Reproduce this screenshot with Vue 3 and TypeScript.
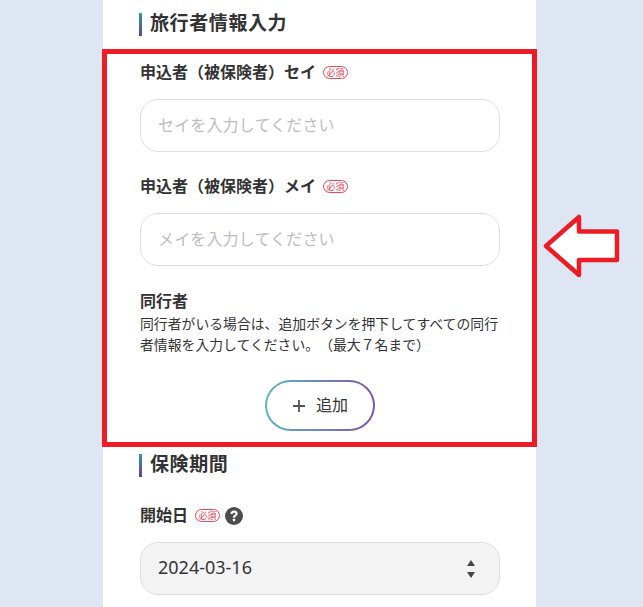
<script setup lang="ts">
const required = '必須'
</script>

<template>
  <div class="page">
    <main class="card">
      <h2 class="heading first">旅行者情報入力</h2>

      <div class="field sei">
        <div class="label"><span>申込者（被保険者）セイ</span><span class="req">{{ required }}</span></div>
        <input class="text" type="text" placeholder="セイを入力してください" />
      </div>

      <div class="field mei">
        <div class="label"><span>申込者（被保険者）メイ</span><span class="req">{{ required }}</span></div>
        <input class="text" type="text" placeholder="メイを入力してください" />
      </div>

      <div class="companion">
        <div class="label plain">同行者</div>
        <p class="desc">同行者がいる場合は、追加ボタンを押下してすべての同行者情報を入力してください。（最大７名まで）</p>
      </div>

      <div class="add-row">
        <button class="add" type="button">
          <svg width="14" height="14" viewBox="0 0 14 14" aria-hidden="true"><path d="M7 1v12M1 7h12" stroke="#555" stroke-width="1.8" fill="none" /></svg>
          <span>追加</span>
        </button>
      </div>

      <h2 class="heading second">保険期間</h2>

      <div class="field start">
        <div class="label">
          <span>開始日</span><span class="req">{{ required }}</span>
          <svg class="help" width="18" height="18" viewBox="0 0 18 18" aria-hidden="true">
            <circle cx="9" cy="9" r="9" fill="#4d4d4d" />
            <path d="M5.400 7c0-2.100 1.500-3.400 3.700-3.400 2.100 0 3.600 1.200 3.600 3 0 1.300-.7 2-1.600 2.600-.8.500-1 .8-1 1.600H7.900c0-1.500.5-2.200 1.400-2.800.8-.5 1.100-.8 1.100-1.300 0-.6-.5-1-1.300-1-.9 0-1.400.6-1.500 1.400z" fill="#fff" />
            <rect x="7.900" y="11.800" width="2.200" height="2.400" rx=".4" fill="#fff" />
          </svg>
        </div>
        <div class="date">
          <span>2024-03-16</span>
          <svg width="8" height="18" viewBox="0 0 8 18" aria-hidden="true"><path d="M4 0l4 6H0zM0 12h8l-4 6z" fill="#444" /></svg>
        </div>
      </div>
    </main>

    <div class="mark"></div>
    <svg class="arrow" width="84" height="72" viewBox="0 0 84 72" aria-hidden="true">
      <path d="M6 36L39 7V21.500H77V50H39V65Z" fill="#fff" stroke="#ed1c24" stroke-width="4.500" stroke-linejoin="round" />
    </svg>
  </div>
</template>

<style scoped>
.page {
  position: relative;
  width: 643px;
  height: 607px;
  overflow: hidden;
  background: #dfe6f3;
  font-family: "Noto Sans CJK JP", "Noto Sans", sans-serif;
  text-spacing-trim: space-all;
  color: #333;
}
.card {
  width: 433px;
  height: 607px;
  margin-left: 103px;
  padding: 0 36px 0 37px;
  box-sizing: border-box;
  background: #fff;
  overflow: hidden;
}
.heading {
  margin: 0;
  padding-left: 8px;
  margin-left: -1px;
  height: 23px;
  line-height: 18px;
  font-size: 19px;
  font-weight: 700;
  letter-spacing: 0.6px;
  border-left: 3px solid;
  border-image: linear-gradient(180deg, #2a9db5, #6b3a96) 1;
  box-sizing: content-box;
}
.heading.first { margin-top: 13px; }
.heading.second { margin-top: 23px; }
.field.sei { margin-top: 24px; }
.field.mei { margin-top: 22px; }
.field.start { margin-top: 26px; }
.label {
  display: flex;
  align-items: center;
  height: 22px;
  font-size: 16px;
  font-weight: 700;
  line-height: 22px;
}
.req {
  display: inline-flex;
  align-items: center;
  justify-content: center;
  width: 25px;
  height: 13px;
  margin: 2px 0 0 7px;
  border: 1px solid #ee4455;
  border-radius: 7px;
  box-sizing: border-box;
  color: #ee4455;
  font-size: 9px;
  font-weight: 400;
  line-height: 1;
}
.help { margin: 3px 0 0 5px; }
.text,
.date {
  display: flex;
  align-items: center;
  width: 360px;
  height: 53px;
  margin-top: 17px;
  padding: 0 18px 4px 17px;
  box-sizing: border-box;
  border: 1px solid #dedede;
  border-radius: 18px;
  font-family: inherit;
  font-size: 16px;
  letter-spacing: 0.15px;
  outline: none;
  background: #fff;
  color: #333;
}
.text::placeholder { color: #bdbdbd; opacity: 1; }
.date {
  justify-content: space-between;
  background: #f3f3f3;
  padding: 0 24px 3px 17px;
  font-family: "Noto Sans", sans-serif;
  font-size: 18px;
  letter-spacing: 0;
}
.date svg { margin-top: 3px; }
.companion { margin-top: 23px; }
.label.plain { height: 22px; }
.desc {
  margin: 2px 0 0;
  font-size: 13.850px;
  line-height: 21px;
  color: #333;
}
.add-row {
  display: flex;
  justify-content: center;
  margin-top: 25px;
}
.add {
  display: flex;
  align-items: center;
  justify-content: center;
  gap: 10px;
  width: 110px;
  height: 51px;
  border: 2px solid transparent;
  border-radius: 26px;
  background:
    linear-gradient(#fff, #fff) padding-box,
    linear-gradient(90deg, #5cb5c8, #7d56a8) border-box;
  font-family: inherit;
  font-size: 16px;
  color: #333;
  padding: 0 0 3px;
}
.add svg { margin-top: 3px; }
.mark {
  position: absolute;
  left: 102px;
  top: 49px;
  width: 435px;
  height: 398px;
  box-sizing: border-box;
  border: 5px solid #ed1c24;
}
.arrow {
  position: absolute;
  left: 540px;
  top: 210px;
}
</style>
